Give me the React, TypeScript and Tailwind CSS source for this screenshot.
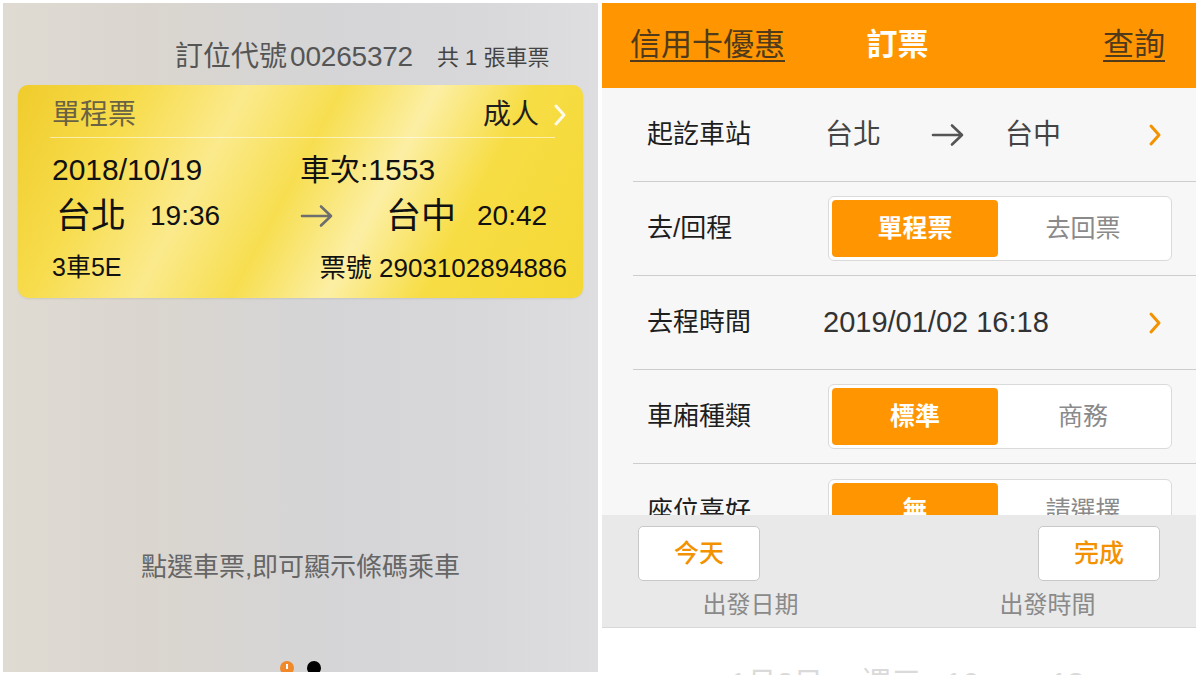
import React from "react"

const font = "font-['Liberation_Sans','Noto_Sans_CJK_TC',sans-serif]"

function Chevron({ className }: { className?: string }) {
  return (
    <svg width="14" height="24" viewBox="0 0 14 24" className={className}>
      <polyline points="3,3 11,12 3,21" fill="none" stroke="currentColor" strokeWidth="3" strokeLinecap="round" strokeLinejoin="round" />
    </svg>
  )
}

function Arrow({ className }: { className?: string }) {
  return (
    <svg width="34" height="26" viewBox="0 0 34 26" className={className}>
      <path d="M2 13 H31 M21 3.5 L31 13 L21 22.5" fill="none" stroke="currentColor" strokeWidth="2.6" strokeLinecap="round" strokeLinejoin="round" />
    </svg>
  )
}

function Segment({ on, off }: { on: string; off: string }) {
  return (
    <div className="ml-[3px] flex h-[65px] w-[344px] rounded-[6px] border border-[#dadada] bg-white p-[3px]">
      <div className="flex w-[166px] items-center justify-center rounded-[4px] bg-[#ff9500] text-[25px] font-bold text-white">
        {on}
      </div>
      <div className="flex flex-1 items-center justify-center text-[25px] text-[#8a8a8a]">{off}</div>
    </div>
  )
}

function Row({ label, children, last }: { label: string; children?: React.ReactNode; last?: boolean }) {
  return (
    <div className={`ml-[31px] flex h-[94px] shrink-0 items-center pl-[14px] pr-[24px] ${last ? "" : "border-b border-[#cdcdcd]"}`}>
      <div className="w-[178px] shrink-0 text-[26px] text-[#1e1e1e]">{label}</div>
      {children}
    </div>
  )
}

function TicketPanel() {
  return (
    <div className="flex h-[669px] w-[595px] shrink-0 flex-col overflow-hidden bg-[linear-gradient(90deg,#dfdbd3_0%,#dad6cf_25%,#d5d5d7_55%,#d8d8da_80%,#dedee0_100%)]">
      <div className="mt-[38px] flex h-[32px] items-center pl-[172px] text-[#555]">
        <span className="text-[28px]">訂位代號</span>
        <span className="ml-[3px] text-[28px] tracking-[-0.2px]">00265372</span>
        <span className="ml-[24px] text-[22px] text-[#444]">共 1 張車票</span>
      </div>

      <div className="mx-[15px] mt-[12px] h-[213px] shrink-0 rounded-[10px] bg-[linear-gradient(118deg,#f0cc2c_0%,#f7dc4c_18%,#fbea8c_34%,#f7de50_48%,#fcefa4_62%,#f7dd45_76%,#f5d834_100%)] pl-[34px] pr-[16px] pt-[8px] shadow-[0_1px_2px_rgba(0,0,0,0.08)]">
        <div className="flex h-[44px] items-center">
          <span className="text-[28px] text-[#6a6244]">單程票</span>
          <span className="ml-auto text-[28px] text-[#1e1e1e]">成人</span>
          <Chevron className="ml-[14px] text-white opacity-90" />
        </div>
        <div className="-ml-[2px] mr-[12px] h-px bg-[rgba(255,255,255,0.55)]" />

        <div className="mt-[15px] flex h-[32px] items-center text-[30px] text-[#111]">
          <span className="w-[248px]">2018/10/19</span>
          <span>車次:1553</span>
        </div>

        <div className="mt-[9px] flex h-[44px] items-center text-[#111]">
          <div className="flex w-[248px] items-center">
            <span className="ml-[4px] text-[35px]">台北</span>
            <span className="ml-[24px] text-[28px]">19:36</span>
          </div>
          <Arrow className="text-[#6e6e6e]" />
          <span className="ml-[52px] text-[35px]">台中</span>
          <span className="ml-[21px] text-[28px]">20:42</span>
        </div>

        <div className="mt-[15px] flex h-[30px] items-center text-[#111]">
          <span className="text-[25px]">3車5E</span>
          <span className="ml-auto text-[26px]">票號 2903102894886</span>
        </div>
      </div>

      <div className="mt-[251px] text-center text-[26px] leading-[36px] text-[#666]">點選車票,即可顯示條碼乘車</div>

      <div className="mt-[76px] flex justify-center gap-[13px]">
        <div className="flex h-[14px] w-[14px] items-start justify-center rounded-full bg-[#f0892a]">
          <div className="mt-[3px] h-[5px] w-[2px] bg-white" />
        </div>
        <div className="h-[14px] w-[14px] rounded-full bg-black" />
      </div>
    </div>
  )
}

function BookingPanel() {
  return (
    <div className="flex h-[672px] w-[594px] shrink-0 flex-col overflow-hidden bg-white">
      <div className="grid h-[85px] shrink-0 grid-cols-[1fr_auto_1fr] items-center bg-[#ff9500] pl-[28px] pr-[31px]">
        <span className="justify-self-start text-[31px] text-[#4f3a1c] underline decoration-2 underline-offset-[5px]">信用卡優惠</span>
        <span className="text-[31px] font-bold text-white">訂票</span>
        <span className="justify-self-end text-[31px] text-[#4f3a1c] underline decoration-2 underline-offset-[5px]">查詢</span>
      </div>

      <div className="flex h-[427px] shrink-0 flex-col overflow-hidden bg-[#f7f7f7]">
        <Row label="起訖車站">
          <span className="text-[28px] text-[#444]">台北</span>
          <Arrow className="ml-[50px] text-[#555]" />
          <span className="ml-[40px] text-[28px] text-[#444]">台中</span>
          <Chevron className="ml-auto mr-[10px] text-[#f39200]" />
        </Row>
        <Row label="去/回程">
          <Segment on="單程票" off="去回票" />
        </Row>
        <Row label="去程時間">
          <span className="-ml-[2px] text-[29px] text-[#333]">2019/01/02 16:18</span>
          <Chevron className="ml-auto mr-[10px] text-[#f39200]" />
        </Row>
        <Row label="車廂種類">
          <Segment on="標準" off="商務" />
        </Row>
        <Row label="座位喜好" last>
          <Segment on="無" off="請選擇" />
        </Row>
      </div>

      <div className="flex h-[113px] shrink-0 flex-col border-b border-[#d8d8d8] bg-[#e9e9e9]">
        <div className="flex justify-between px-[36px] pt-[11px]">
          <div className="flex h-[55px] w-[122px] items-center justify-center rounded-[5px] border border-[#c8c8c8] bg-white text-[25px] font-medium text-[#f39200]">今天</div>
          <div className="flex h-[55px] w-[122px] items-center justify-center rounded-[5px] border border-[#c8c8c8] bg-white text-[25px] font-medium text-[#f39200]">完成</div>
        </div>
        <div className="mt-[10px] grid grid-cols-2 text-center text-[24px] leading-[28px] text-[#8a8a8a]">
          <span>出發日期</span>
          <span>出發時間</span>
        </div>
      </div>

      <div className="flex h-[47px] shrink-0 overflow-hidden pl-[128px] pt-[37px] text-[30px] leading-[36px] text-[#dadada]">
        <span>1月2日</span>
        <span className="ml-[38px]">週三</span>
        <span className="ml-[24px]">16</span>
        <span className="ml-[72px]">18</span>
      </div>
    </div>
  )
}

export default function App() {
  return (
    <div className={`flex h-[675px] w-[1200px] gap-[4px] overflow-hidden bg-white pl-[3px] pt-[3px] ${font}`}>
      <TicketPanel />
      <BookingPanel />
    </div>
  )
}
